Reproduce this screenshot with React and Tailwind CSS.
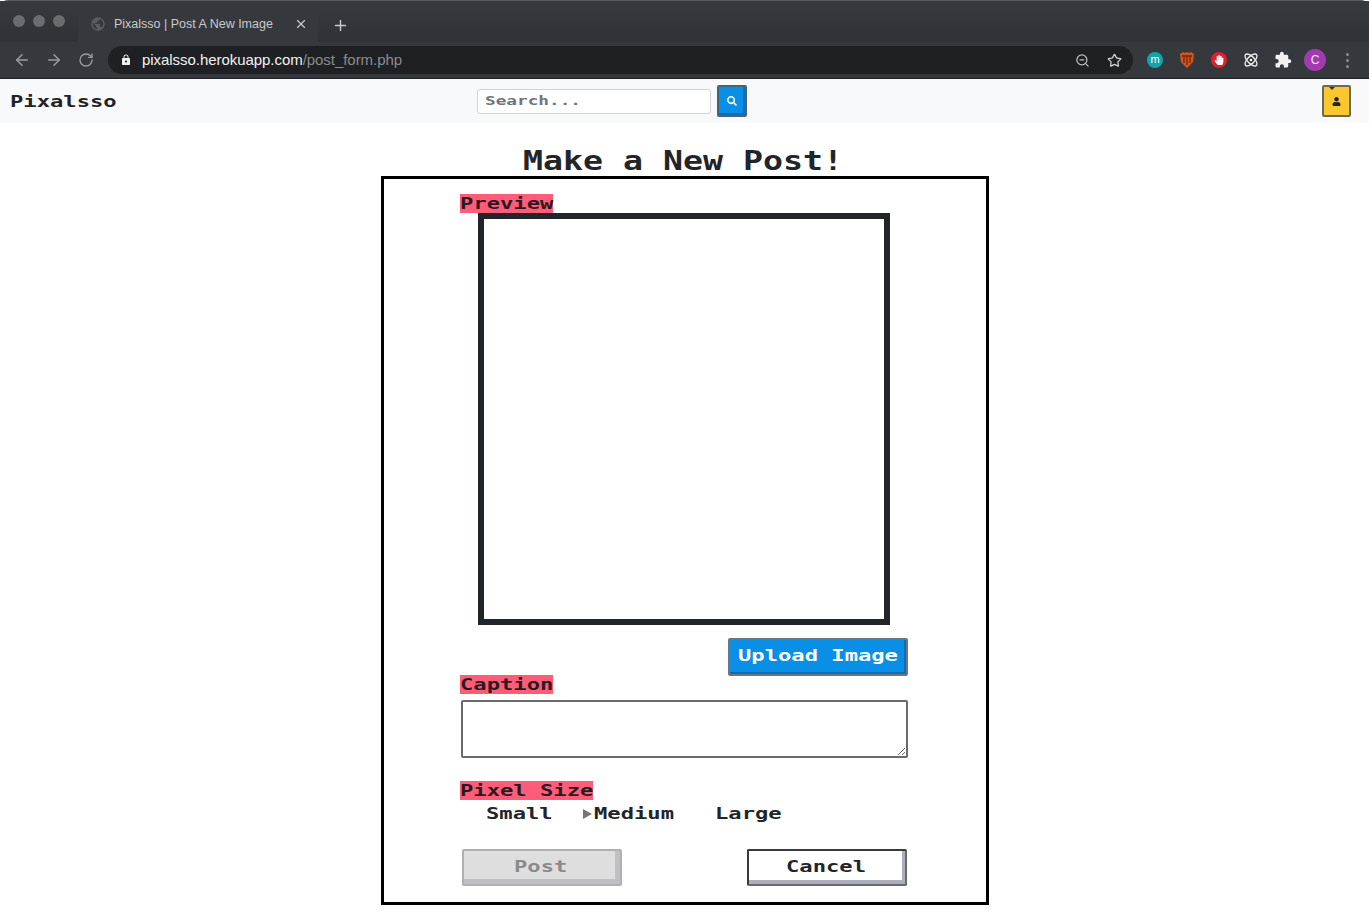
import { ArrowLeft, ArrowRight, RotateCw, ZoomOut, Star, Atom, X, Plus } from "lucide-react";
import { MdLock, MdExtension, MdPublic } from "react-icons/md";
import { FaHandPaper, FaSearch, FaUser } from "react-icons/fa";

const mono = "font-['DejaVu_Sans_Mono',monospace] font-bold";
const label = "self-start bg-[#ff5c7a] text-[#2a1a20] h-[19px] leading-[19px]";

// wide pixel-ish lettering: the outer span reserves the stretched width
function Px({ children, stretch = "scale-x-[1.476]", factor = 1.476, size = "text-[15px]" }) {
  return (
    <span className={`inline-block text-left ${size} ${mono}`} style={{ width: `${children.length * factor}ch` }}>
      <span className={`inline-block origin-left whitespace-pre ${stretch}`}>{children}</span>
    </span>
  );
}

function BrowserChrome() {
  return (
    <div className="bg-[#35383c] rounded-t-[8px] border-t border-[#5a5d60] font-['Liberation_Sans',sans-serif]">
      <div className="h-[41px] flex items-end bg-gradient-to-b from-[#36393d] to-[#2f3236]">
        <div className="flex gap-[8px] pl-[13px] pr-[13px] self-start mt-[14px]">
          <span className="w-[12px] h-[12px] rounded-full bg-[#6a6d70]" />
          <span className="w-[12px] h-[12px] rounded-full bg-[#6a6d70]" />
          <span className="w-[12px] h-[12px] rounded-full bg-[#6a6d70]" />
        </div>
        <div className="w-[240px] h-[34px] bg-[#35383c] rounded-t-[8px] flex items-center pl-[12px] pr-[10px] pb-[2px] text-[12.5px] text-[#c8cacc]">
          <MdPublic size={16} className="text-[#5a5d60] mr-[8px]" />
          <span className="flex-1">Pixalsso | Post A New Image</span>
          <X size={14} className="text-[#c8cacc]" />
        </div>
        <Plus size={17} className="text-[#c8cacc] ml-[14px] mb-[8px]" />
      </div>
      <div className="h-[37px] bg-[#35383c] flex items-center pl-[13px] pr-[13px] border-b border-[#202124]">
        <ArrowLeft size={18} className="text-[#9a9c9e]" />
        <ArrowRight size={18} className="text-[#9a9c9e] ml-[14px]" />
        <RotateCw size={16} className="text-[#9a9c9e] ml-[15px]" />
        <div className="ml-[14px] w-[1025px] h-[28px] rounded-full bg-[#1f2023] flex items-center pl-[12px] pr-[11px]">
          <MdLock size={12} className="text-[#f1f1f1]" />
          <span className="ml-[10px] text-[15px] tracking-[-0.05px] text-[#f1f1f1]">pixalsso.herokuapp.com<span className="text-[#8a8c8e]">/post_form.php</span></span>
          <ZoomOut size={15} className="ml-auto text-[#bfc1c3]" />
          <Star size={15} className="ml-[17px] text-[#d0d2d4]" />
        </div>
        <div className="ml-[14px] w-[16px] h-[16px] rounded-full bg-[#11a6a8] text-white text-[11px] leading-[15px] text-center">m</div>
        <svg viewBox="0 0 16 18" className="ml-[16px] w-[16px] h-[18px]">
          <path d="M1 3l3-2 2 1 2-1 2 1 2-1 3 2-1 8-6 6-6-6z" fill="#d9531e" />
          <path d="M3 5h10M5 5v7M8 5v9M11 5v7" stroke="#6b2a10" strokeWidth="1.3" fill="none" />
        </svg>
        <div className="ml-[16px] w-[16px] h-[16px] rounded-full bg-[#e0202c] flex items-center justify-center">
          <FaHandPaper size={10} className="text-white" />
        </div>
        <Atom size={16} className="ml-[16px] text-[#f1f1f1]" />
        <MdExtension size={18} className="ml-[15px] text-[#f1f1f1]" />
        <div className="ml-[12px] w-[22px] h-[22px] rounded-full bg-[#a23bb0] text-[#f1e6f3] text-[12px] leading-[22px] text-center">C</div>
        <div className="ml-[20px] flex flex-col gap-[3px]">
          <span className="w-[3px] h-[3px] rounded-full bg-[#8a8c8e]" />
          <span className="w-[3px] h-[3px] rounded-full bg-[#8a8c8e]" />
          <span className="w-[3px] h-[3px] rounded-full bg-[#8a8c8e]" />
        </div>
      </div>
    </div>
  );
}

function NavBar() {
  return (
    <div className="h-[44px] bg-[#f8f9fa] flex items-center pl-[10px] pr-[18px]">
      <div className="w-[467px] text-[#1f2326]"><Px>Pixalsso</Px></div>
      <div className="w-[234px] h-[25px] bg-white border border-[#ced4da] rounded-[3px] flex items-center pl-[7px] text-[#6c757d]">
        <Px size="text-[12px]">Search...</Px>
      </div>
      <button className="ml-[6px] w-[30px] h-[32px] bg-[#0a8fe6] border-2 border-[#4a6278] rounded-[2px] shadow-[inset_-2px_-2px_0_#0670b8] flex items-center justify-center">
        <FaSearch size={10} className="text-white" />
      </button>
      <button className="relative ml-auto w-[29px] h-[32px] bg-[#fbc72e] border-2 border-[#6a6a5c] rounded-[2px] flex items-center justify-center">
        <span className="absolute top-0 left-[5px] border-x-[3px] border-x-transparent border-t-[3px] border-t-[#333]" />
        <FaUser size={9} className="text-[#1f2326]" />
      </button>
    </div>
  );
}

function SizeOption({ name, selected, className }) {
  return (
    <span className={`flex items-center text-[#212529] ${className}`}>
      {selected && <span className="w-0 h-0 mr-[2px] border-y-[5px] border-y-transparent border-l-[9px] border-l-[#777]" />}
      <Px>{name}</Px>
    </span>
  );
}

export default function App() {
  return (
    <div className="min-h-screen bg-white overflow-hidden">
      <BrowserChrome />
      <NavBar />
      <h1 className="mt-[23px] h-[30px] flex justify-center items-center text-[#212529] pr-[2px]">
        <Px size="text-[26px]" stretch="scale-x-[1.278]" factor={1.278}>Make a New Post!</Px>
      </h1>
      <div className="mx-auto w-[608px] h-[729px] border-[3px] border-black flex flex-col pt-[15px] pl-[76px] pr-[78px]">
        <div className={label}><Px>Preview</Px></div>
        <div className="ml-[18px] w-[412px] h-[412px] border-[6px] border-[#212529]" />
        <button className="self-end mt-[13px] w-[180px] h-[38px] pb-[3px] bg-[#0a8fe6] border-2 border-[#6b7680] rounded-[2px] shadow-[inset_-2px_-2px_0_#0670b8] text-white">
          <Px>Upload Image</Px>
        </button>
        <div className={`${label} mt-[-1px]`}><Px>Caption</Px></div>
        <textarea className="ml-[1px] mt-[6px] w-[447px] h-[58px] border-2 border-[#6a6a6a] rounded-[2px] bg-white block" />
        <div className={`${label} mt-[23px]`}><Px>Pixel Size</Px></div>
        <div className="flex items-center h-[28px] pl-[26px]">
          <SizeOption name="Small" className="w-[97px]" />
          <SizeOption name="Medium" selected className="w-[132px]" />
          <SizeOption name="Large" />
        </div>
        <div className="flex justify-between mt-[21px] pl-[2px] pr-[1px]">
          <button className="w-[160px] h-[37px] pb-[2px] pr-[2px] bg-[#dedede] border-2 border-[#b0b0b0] rounded-[2px] shadow-[inset_-5px_-5px_0_#bfc0c4] text-[#8a8a8a]">
            <Px>Post</Px>
          </button>
          <button className="w-[160px] h-[37px] pb-[2px] pr-[2px] bg-white border-2 border-[#3a3a3a] border-r-[#6a6a6a] border-b-[#6a6a6a] rounded-[2px] shadow-[inset_-3px_-4px_0_#adafbc] text-[#212529]">
            <Px>Cancel</Px>
          </button>
        </div>
      </div>
    </div>
  );
}
